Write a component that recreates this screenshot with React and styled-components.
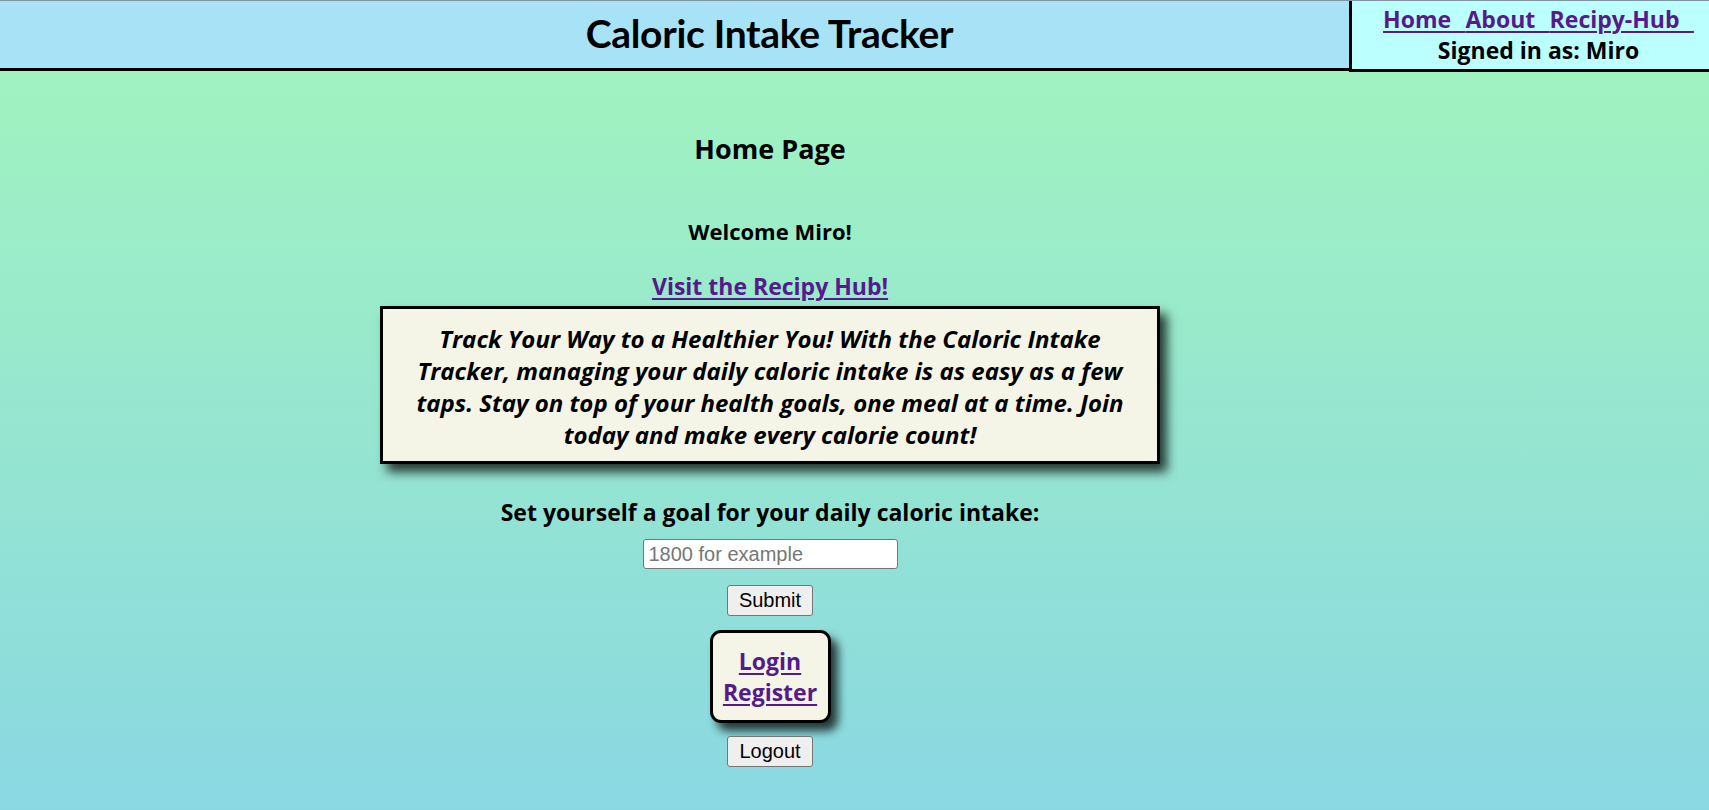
import styled, { createGlobalStyle } from 'styled-components';

const GlobalStyle = createGlobalStyle`
  html, body {
    margin: 0;
    padding: 0;
  }
  body {
    font-family: "Open Sans", "Noto Sans", sans-serif;
    color: #000;
  }
`;

const Page = styled.div`
  min-height: 810px;
  display: flex;
  flex-direction: column;
  background: linear-gradient(180deg, #a3f5bd 0%, #8ad8e2 100%);
`;

const Header = styled.header`
  display: flex;
  align-items: stretch;
  height: 67px;
  background: #a8e2f6;
  border-top: 1px solid #7f95a3;
  border-bottom: 3px solid #000;
`;

const Title = styled.h1`
  flex: 1;
  margin: 0;
  padding: 0 0 3px 190px;
  display: flex;
  align-items: center;
  justify-content: center;
  font-family: Lato, "Open Sans", sans-serif;
  font-size: 39px;
  font-weight: 700;
  letter-spacing: -0.3px;
`;

const NavBox = styled.nav`
  width: 360px;
  margin-bottom: -4px;
  padding: 3px 0 0 16px;
  background: #bbffff;
  border-left: 3px solid #000;
  border-bottom: 3px solid #000;
  text-align: center;
  font-size: 23px;
  font-weight: 700;
  line-height: 31px;
  box-sizing: border-box;
`;

const NavLinks = styled.div`
  white-space: pre;
  word-spacing: 1.2px;
`;

const Link = styled.a`
  color: #551a8b;
  text-decoration: underline;
  text-decoration-thickness: 2px;
  text-underline-offset: 3px;
  cursor: pointer;
`;

const Main = styled.main`
  flex: 1;
  display: flex;
  flex-direction: column;
  align-items: center;
  padding: 0 169px 40px 0;
  text-align: center;
`;

const PageHeading = styled.h2`
  margin: 59px 0 0;
  font-size: 27px;
  font-weight: 700;
  line-height: 37px;
`;

const Welcome = styled.h3`
  margin: 50px 0 0;
  font-size: 22px;
  font-weight: 700;
  line-height: 29px;
`;

const HubLink = styled(Link)`
  display: block;
  margin-top: 24px;
  font-size: 23px;
  font-weight: 700;
  line-height: 32px;
`;

const Pitch = styled.div`
  width: 780px;
  box-sizing: border-box;
  margin-top: 4px;
  padding: 14px 16px 10px;
  background: #f4f4e7;
  border: 3px solid #000;
  box-shadow: 7px 8px 10px rgba(0, 0, 0, 0.75);
  font-size: 24px;
  font-style: italic;
  font-weight: 700;
  line-height: 32px;
`;

const GoalLabel = styled.h3`
  margin: 33px 0 0;
  font-size: 23px;
  font-weight: 700;
  line-height: 30px;
`;

const GoalInput = styled.input`
  margin-top: 12px;
  width: 255px;
  height: 30px;
  box-sizing: border-box;
  padding: 1px 5px;
  font-family: "Liberation Sans", Arial, sans-serif;
  font-size: 20px;
  border: 1px solid #767676;
  border-radius: 3px;
  background: #fff;

  &::placeholder {
    color: #767676;
  }
`;

const Button = styled.button`
  margin-top: ${p => p.$gap}px;
  width: 86px;
  height: 31px;
  box-sizing: border-box;
  padding: 0;
  font-family: "Liberation Sans", Arial, sans-serif;
  font-size: 20px;
  color: #000;
  background: #efefef;
  border: 1px solid #767676;
  border-radius: 3px;
`;

const AuthBox = styled.div`
  margin-top: 14px;
  width: 121px;
  height: 93px;
  box-sizing: border-box;
  display: flex;
  flex-direction: column;
  justify-content: center;
  background: #f4f4e7;
  border: 3px solid #000;
  border-radius: 11px;
  box-shadow: 7px 8px 10px rgba(0, 0, 0, 0.75);
  font-size: 23px;
  font-weight: 700;
  line-height: 31px;
`;

export default function App() {
  return (
    <>
      <GlobalStyle />
      <Page>
        <Header>
          <Title>Caloric Intake Tracker</Title>
          <NavBox>
            <NavLinks>
              <Link>{'Home  '}</Link>
              <Link>{'About  '}</Link>
              <Link>{'Recipy-Hub  '}</Link>
            </NavLinks>
            <div>Signed in as: Miro</div>
          </NavBox>
        </Header>
        <Main>
          <PageHeading>Home Page</PageHeading>
          <Welcome>Welcome Miro!</Welcome>
          <HubLink>Visit the Recipy Hub!</HubLink>
          <Pitch>
            Track Your Way to a Healthier You! With the Caloric Intake<br />
            Tracker, managing your daily caloric intake is as easy as a few<br />
            taps. Stay on top of your health goals, one meal at a time. Join<br />
            today and make every calorie count!
          </Pitch>
          <GoalLabel>Set yourself a goal for your daily caloric intake:</GoalLabel>
          <GoalInput type="number" placeholder="1800 for example" />
          <Button $gap={16}>Submit</Button>
          <AuthBox>
            <Link>Login</Link>
            <Link>Register</Link>
          </AuthBox>
          <Button $gap={13}>Logout</Button>
        </Main>
      </Page>
    </>
  );
}
